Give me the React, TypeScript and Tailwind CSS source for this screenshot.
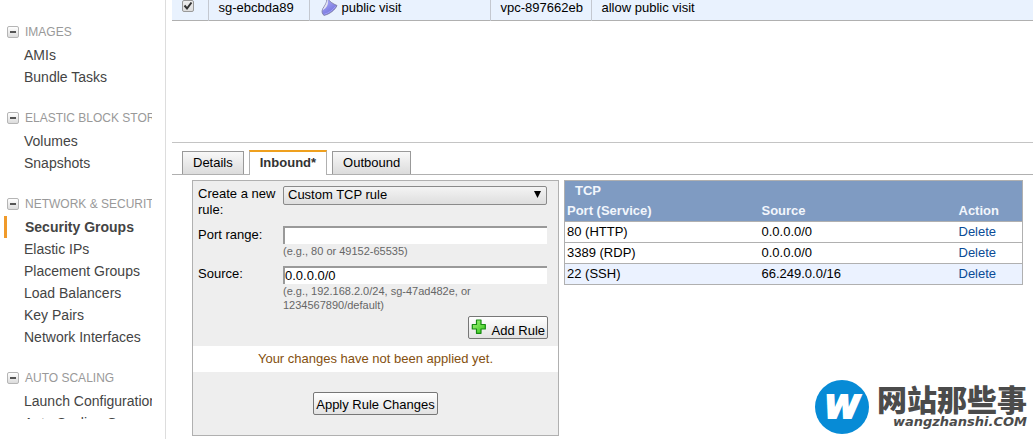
import { useState } from "react";

const sections = [
  { title: "IMAGES", items: ["AMIs", "Bundle Tasks"] },
  { title: "ELASTIC BLOCK STORE", items: ["Volumes", "Snapshots"] },
  {
    title: "NETWORK & SECURITY",
    items: [
      "Security Groups",
      "Elastic IPs",
      "Placement Groups",
      "Load Balancers",
      "Key Pairs",
      "Network Interfaces",
    ],
  },
  { title: "AUTO SCALING", items: ["Launch Configurations", "Auto Scaling Groups"] },
];

const rules = [
  { port: "80 (HTTP)", source: "0.0.0.0/0" },
  { port: "3389 (RDP)", source: "0.0.0.0/0" },
  { port: "22 (SSH)", source: "66.249.0.0/16" },
];

function Sidebar() {
  return (
    <nav className="h-screen w-[166px] shrink-0 border-r border-[#ddd] pb-5">
      <div className="h-full w-[152px] overflow-hidden whitespace-nowrap pt-[22px]">
        {sections.map((section) => (
          <section key={section.title} className="mb-5">
            <h2 className="mb-0.5 flex h-5 items-center gap-[6px] pl-[7px] text-[12px] text-[#999]">
              <button
                aria-label={`Collapse ${section.title}`}
                className="flex size-3 shrink-0 items-center justify-center rounded-[2px] border border-[#b5b5b5] bg-linear-to-b from-white to-[#dcdcdc]"
              >
                <span className="h-0.5 w-1.5 bg-[#555]" />
              </button>
              {section.title}
            </h2>
            <ul>
              {section.items.map((item) => {
                const active = item === "Security Groups";
                return (
                  <li key={item} className="pl-1">
                    <a
                      href="#"
                      className={
                        active
                          ? "block border-l-3 border-[#f09a2a] pl-[18px] text-[14px] leading-[22px] font-bold text-[#444]"
                          : "block pl-5 text-[14px] leading-[22px] text-[#444]"
                      }
                    >
                      {item}
                    </a>
                  </li>
                );
              })}
            </ul>
          </section>
        ))}
      </div>
    </nav>
  );
}

function GroupIcon() {
  return (
    <svg viewBox="0 0 17 17" className="size-[17px] shrink-0" aria-hidden="true">
      <defs>
        <linearGradient id="shield" x1="0" y1="0" x2="0.6" y2="1">
          <stop offset="0" stopColor="#b9b9fb" />
          <stop offset="1" stopColor="#6c6cdc" />
        </linearGradient>
      </defs>
      <path d="M6 -2C8 1 12 4 16 5.500C14 10 9 14 3 15.400C0.800 13.500 .4 11 2.200 8C4 5 6 3 6 -2Z" fill="url(#shield)" stroke="#76769c" strokeWidth="0.8" />
      <path d="M6.200 -1.500C7 1 7.200 3 6.500 5C5.500 7.500 3.500 9 1.600 10.500C2 7.500 6 5 6.200 -1.500Z" fill="#e6e6f0" />
      <path d="M3.200 14.300C8 12.800 12 10 14.600 6.300" fill="none" stroke="#a9a9f8" strokeWidth="0.8" />
    </svg>
  );
}

function PlusIcon() {
  return (
    <svg viewBox="0 0 15 15" className="size-[15px]" aria-hidden="true">
      <defs>
        <linearGradient id="plus" x1="0" y1="0" x2="1" y2="1">
          <stop offset="0" stopColor="#a5f27c" />
          <stop offset="1" stopColor="#32c818" />
        </linearGradient>
      </defs>
      <path d="M5.500 1h4.500v4.500H14.300V10H10v4.300H5.500V10H1.300V5.500H5.500Z" fill="url(#plus)" stroke="#168a12" strokeWidth="1.200" strokeLinejoin="round" />
    </svg>
  );
}

const buttonClass =
  "rounded-[2px] border border-[#777] bg-linear-to-b from-white to-[#e2e2e2] text-[13px] text-black";

const inputClass =
  "block h-[18px] w-full border-t-2 border-l-2 border-[#999] bg-white text-[13px] leading-4 text-black outline-none";

function RuleForm() {
  const [source, setSource] = useState("0.0.0.0/0");
  const [port, setPort] = useState("");
  return (
    <form className="w-[367px] shrink-0 border border-[#b0b0b0] bg-[#eee]" onSubmit={(e) => e.preventDefault()}>
      <div className="grid grid-cols-[85px_1fr] pt-[5px] pr-[11px] pl-[5px]">
        <label htmlFor="rule" className="h-10 leading-4">
          Create a new rule:
        </label>
        <div className="relative h-5">
          <select
            id="rule"
            className="block h-[19px] w-full appearance-none rounded-[2px] border border-[#8a8a8a] bg-linear-to-b from-[#f4f4f4] to-[#dedede] pl-1 text-[13px] leading-4 text-black"
          >
            <option>Custom TCP rule</option>
          </select>
          <svg viewBox="0 0 7 7" className="pointer-events-none absolute top-[5px] right-[6px] size-[7px]" aria-hidden="true">
            <path d="M0 0H7L3.500 7Z" />
          </svg>
        </div>
        <label htmlFor="port" className="h-10 leading-[18px]">
          Port range:
        </label>
        <div>
          <input id="port" className={inputClass} value={port} onChange={(e) => setPort(e.target.value)} />
          <p className="text-[11px] leading-[14px] text-[#666]">(e.g., 80 or 49152-65535)</p>
        </div>
        <label htmlFor="source" className="leading-4">
          Source:
        </label>
        <div>
          <input id="source" className={inputClass} value={source} onChange={(e) => setSource(e.target.value)} />
          <p className="text-[11px] leading-[14px] text-[#666]">
            (e.g., 192.168.2.0/24, sg-47ad482e, or 1234567890/default)
          </p>
        </div>
      </div>
      <div className="mt-1 flex justify-end pr-[10px] pb-[7px]">
        <button type="submit" className={`${buttonClass} flex h-[23px] gap-[6px] px-0.5 pt-[2px]`}>
          <PlusIcon />
          <span className="pt-1 leading-4">Add Rule</span>
        </button>
      </div>
      <p className="bg-white py-[5px] text-center leading-4 text-[#84500f]">Your changes have not been applied yet.</p>
      <div className="flex justify-center py-5">
        <button type="button" className={`${buttonClass} h-[23px] px-0.5 pt-[2px]`}>
          Apply Rule Changes
        </button>
      </div>
    </form>
  );
}

function RuleTable() {
  return (
    <div className="min-w-0 flex-1">
      <table className="w-full border-collapse border border-[#b0b0b0] text-left">
        <thead className="bg-[#7f9bc2] text-[#f2f6fc]">
          <tr>
            <th colSpan={3} className="h-5 pl-[10px] leading-5">
              TCP
            </th>
          </tr>
          <tr>
            <th className="h-5 pl-0.5 leading-5">Port (Service)</th>
            <th className="w-[197px] leading-5">Source</th>
            <th className="w-16 leading-5">Action</th>
          </tr>
        </thead>
        <tbody>
          {rules.map((rule) => (
            <tr key={rule.port} className="border-t border-[#b0b0b0] last:bg-[#ebf2ff]">
              <td className="h-[21px] pl-0.5 leading-5">{rule.port}</td>
              <td className="leading-5">{rule.source}</td>
              <td className="leading-5">
                <a href="#" className="text-[#0a4b96]">
                  Delete
                </a>
              </td>
            </tr>
          ))}
        </tbody>
      </table>
    </div>
  );
}

function GroupTable() {
  const [checked, setChecked] = useState(true);
  return (
    <table className="w-full table-fixed border-collapse bg-[#e9f2fe]">
      <tbody>
        <tr className="border-b border-[#b0b0b0]">
          <td className="h-5 w-9 border-r border-[#c4c8d0] pl-[10px] align-top">
            <label className="relative block size-3">
              <input
                type="checkbox"
                aria-label="Select sg-ebcbda89"
                checked={checked}
                onChange={() => setChecked(!checked)}
                className="block size-3 appearance-none rounded-[2px] border border-[#999] bg-linear-to-b from-[#eee] to-[#ddd]"
              />
              {checked && (
                <svg viewBox="0 0 12 12" className="pointer-events-none absolute inset-0 size-3" aria-hidden="true">
                  <path d="M2.500 5.500L5 8.500L9.500 2.500" fill="none" stroke="#333" strokeWidth="2" />
                </svg>
              )}
            </label>
          </td>
          <td className="w-[101px] border-r border-[#c4c8d0] pl-[10px] align-top leading-4">sg-ebcbda89</td>
          <td className="w-[181px] border-r border-[#c4c8d0] pl-[11px] align-top leading-4">
            <span className="flex gap-1">
              <GroupIcon />
              public visit
            </span>
          </td>
          <td className="w-[101px] border-r border-[#c4c8d0] pl-[10px] align-top leading-4">vpc-897662eb</td>
          <td className="pl-[10px] align-top leading-4">allow public visit</td>
        </tr>
      </tbody>
    </table>
  );
}

function Brand() {
  return (
    <div className="absolute right-[6px] bottom-[5px] flex items-center gap-2 text-[#4b4b4b]">
      <div className="flex size-[54px] items-center justify-center rounded-full bg-[#078bd6] font-['DejaVu_Sans',sans-serif] text-[32px] leading-none font-bold text-white italic [-webkit-text-stroke:2px_white]">
        W
      </div>
      <div className="text-right">
        <div className="font-['Noto_Sans_CJK_SC',sans-serif] text-[30px] leading-[26px] font-black">网站那些事</div>
        <div className="pt-1 font-['DejaVu_Sans',sans-serif] text-[13px] leading-[14px] font-bold italic">wangzhanshi.COM</div>
      </div>
    </div>
  );
}

export default function App() {
  return (
    <div className="relative flex min-h-screen overflow-hidden bg-white font-['Liberation_Sans',Arial,sans-serif] text-[13px] text-black">
      <Sidebar />
      <main className="min-w-0 flex-1 pl-[6px]">
        <GroupTable />
        <div className="mt-[121px] border-t border-[#c4c4c4] pt-[7px]">
          <div role="tablist" className="flex items-end gap-[5px] border-b border-[#b0b0b0] pl-[10px]">
            <button role="tab" className="h-[23px] border border-b-0 border-[#999] bg-linear-to-b from-[#f8f8f8] to-[#dcdcdc] px-[10px]">
              Details
            </button>
            <button
              role="tab"
              aria-selected="true"
              className="-mb-px h-[25px] border border-t-2 border-b-0 border-[#b0b0b0] border-t-[#efa01e] bg-white px-[10px] font-bold text-[#333]"
            >
              Inbound*
            </button>
            <button role="tab" className="h-[23px] border border-b-0 border-[#999] bg-linear-to-b from-[#f8f8f8] to-[#dcdcdc] px-[10px]">
              Outbound
            </button>
          </div>
          <div className="flex items-start gap-[5px] pt-[5px] pr-[10px] pl-5">
            <RuleForm />
            <RuleTable />
          </div>
        </div>
      </main>
      <Brand />
    </div>
  );
}
